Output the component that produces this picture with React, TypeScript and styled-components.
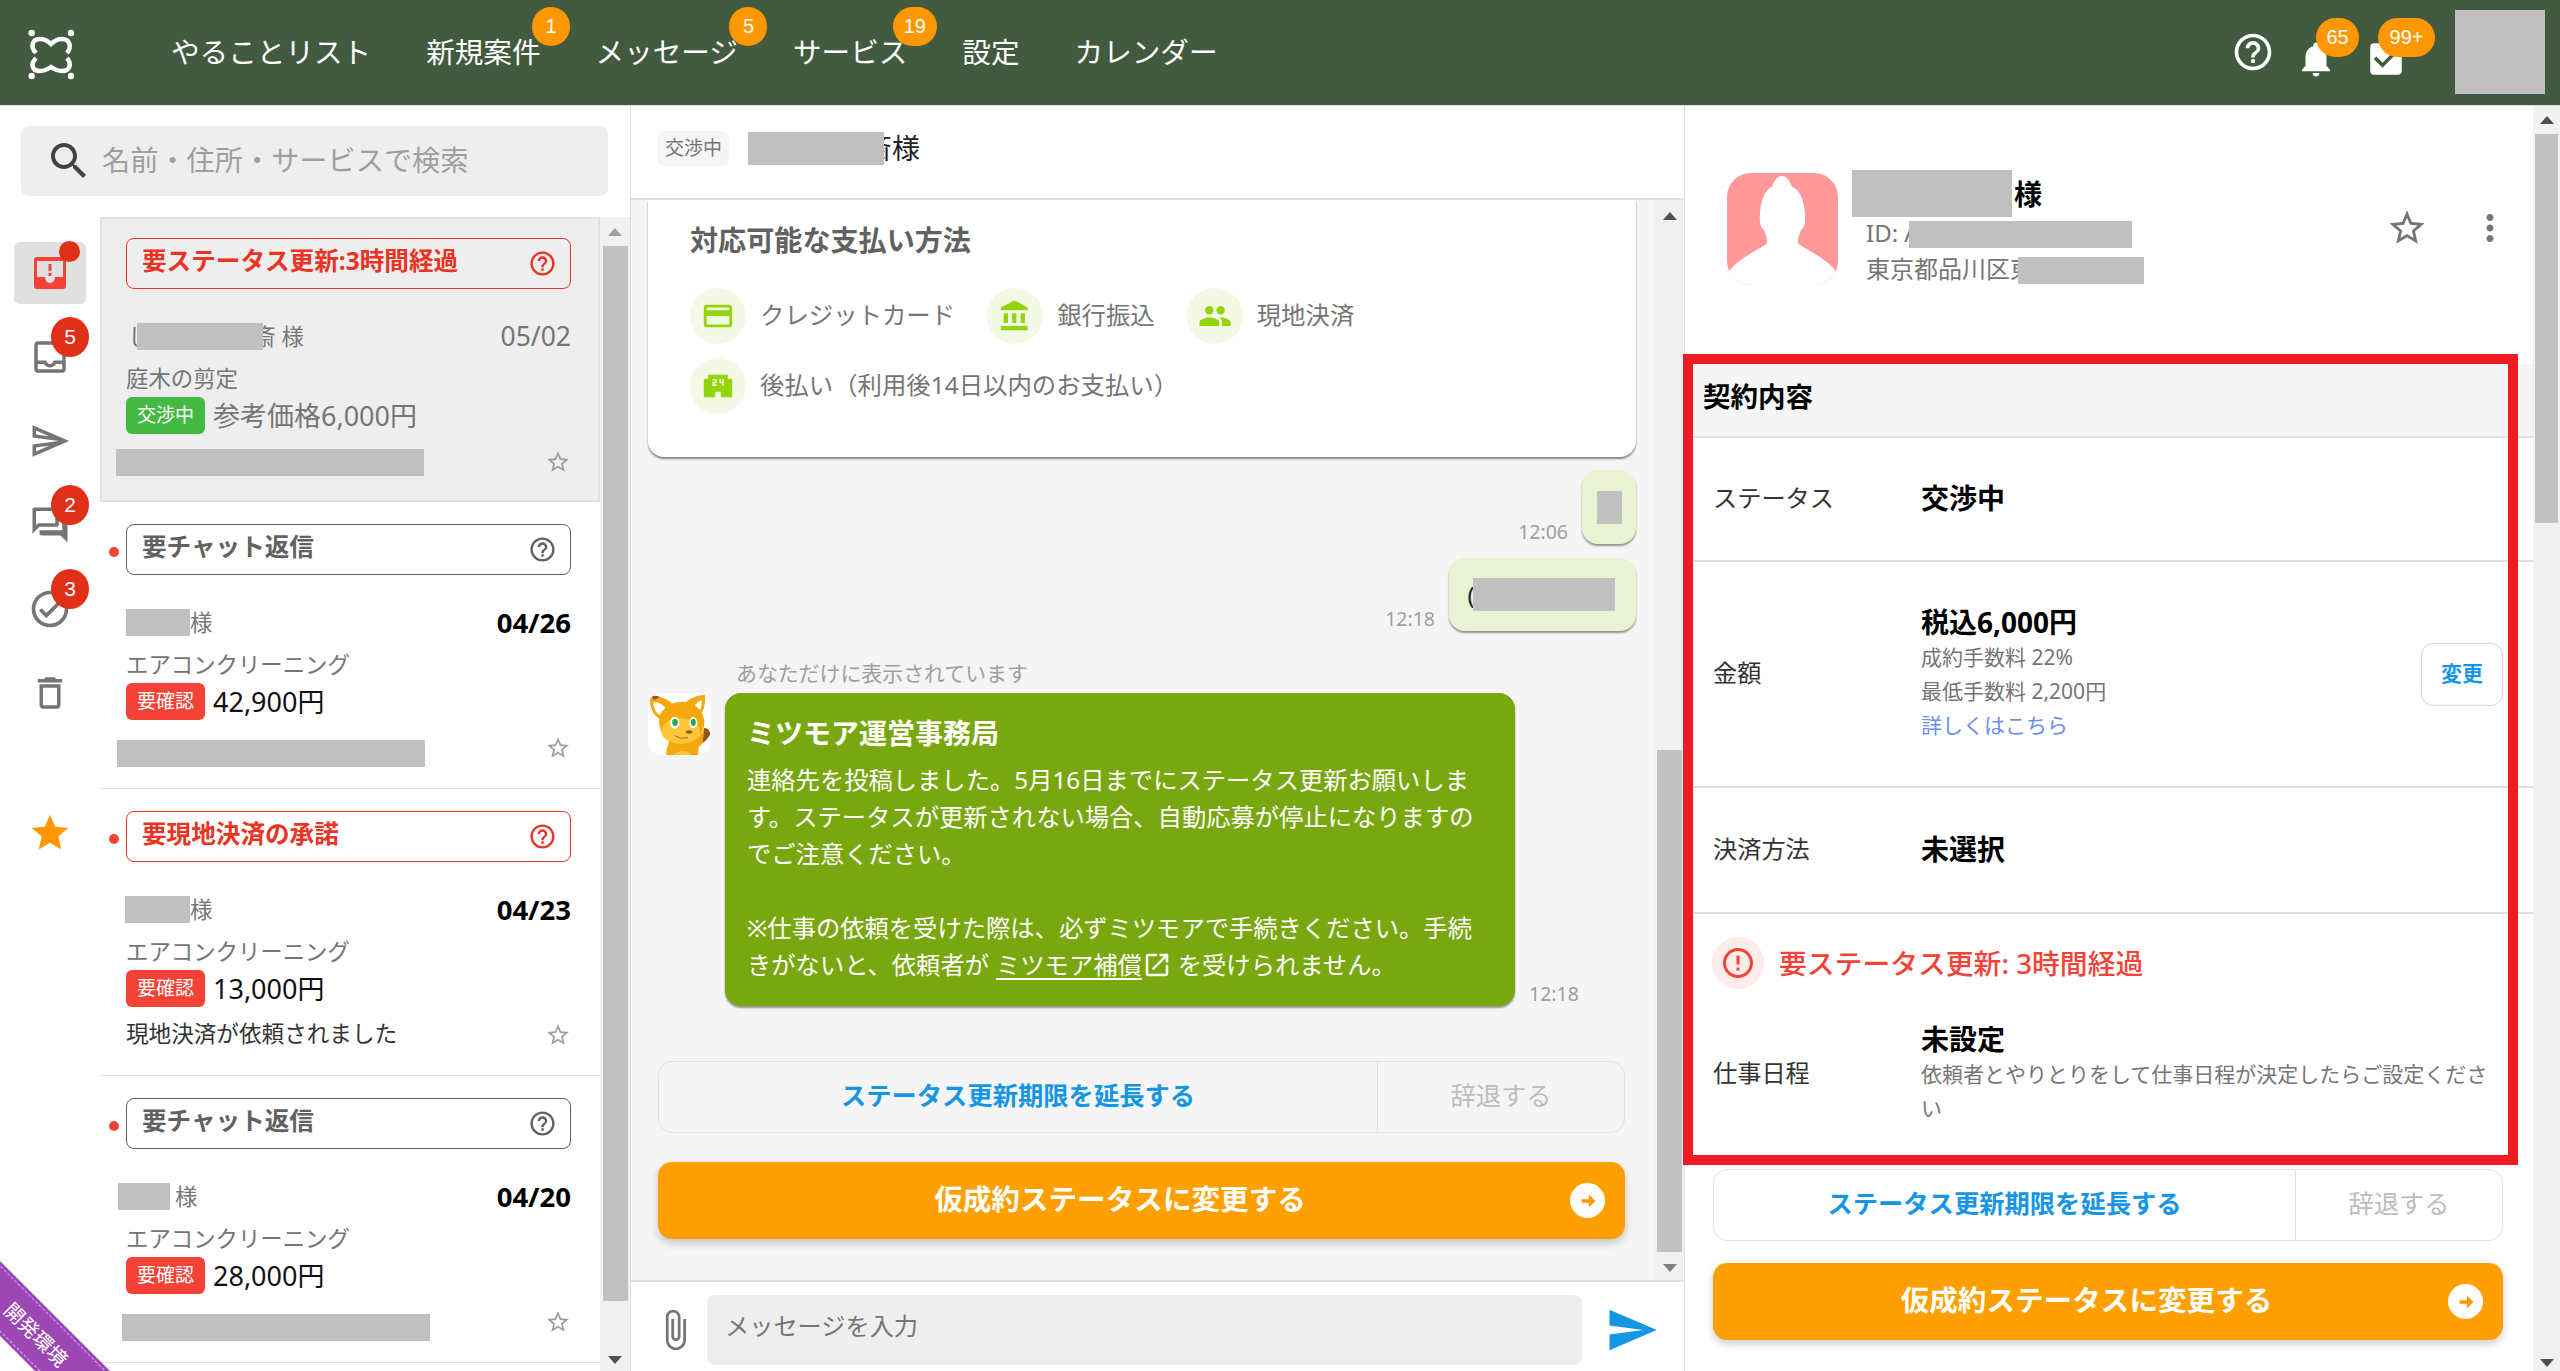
import React from "react"
import styled, { createGlobalStyle } from "styled-components"

const GlobalStyle = createGlobalStyle`
  html, body {
    margin: 0;
    padding: 0;
    overflow: hidden;
    font-family: "Noto Sans", "Noto Sans CJK JP", sans-serif;
    color: #333;
  }
  * {
    box-sizing: border-box;
  }
`

const paths = {
  search:
    "M15.5 14h-.79l-.28-.27C15.41 12.59 16 11.11 16 9.5 16 5.91 13.09 3 9.5 3S3 5.91 3 9.5 5.91 16 9.5 16c1.61 0 3.09-.59 4.23-1.57l.27.28v.79l5 4.99L20.49 19l-4.99-5zm-6 0C7.01 14 5 11.99 5 9.5S7.01 5 9.5 5 14 7.01 14 9.5 11.99 14 9.5 14z",
  help:
    "M11 18h2v-2h-2v2zm1-16C6.48 2 2 6.48 2 12s4.48 10 10 10 10-4.48 10-10S17.52 2 12 2zm0 18c-4.41 0-8-3.59-8-8s3.59-8 8-8 8 3.59 8 8-3.59 8-8 8zm0-14c-2.21 0-4 1.79-4 4h2c0-1.1.9-2 2-2s2 .9 2 2c0 2-3 1.75-3 5h2c0-2.25 3-2.5 3-5 0-2.21-1.79-4-4-4z",
  bell:
    "M12 22c1.1 0 2-.9 2-2h-4c0 1.1.89 2 2 2zm6-6v-5c0-3.07-1.64-5.64-4.5-6.32V4c0-.83-.67-1.5-1.5-1.5s-1.5.67-1.5 1.5v.68C7.63 5.36 6 7.92 6 11v5l-2 2v1h16v-1l-2-2z",
  checkBox:
    "M19 3H5c-1.11 0-2 .9-2 2v14c0 1.1.89 2 2 2h14c1.11 0 2-.9 2-2V5c0-1.1-.89-2-2-2zm-9 14l-5-5 1.41-1.41L10 14.17l7.59-7.59L19 8l-9 9z",
  starBorder:
    "M22 9.24l-7.19-.62L12 2 9.19 8.63 2 9.24l5.46 4.73L5.82 21 12 17.27 18.18 21l-1.63-7.03L22 9.24zM12 15.4l-3.76 2.27 1-4.28-3.32-2.88 4.38-.38L12 6.1l1.71 4.04 4.38.38-3.32 2.88 1 4.28L12 15.4z",
  star: "M12 17.27L18.18 21l-1.64-7.03L22 9.24l-7.19-.61L12 2 9.19 8.63 2 9.24l5.46 4.73L5.82 21z",
  more:
    "M12 8c1.1 0 2-.9 2-2s-.9-2-2-2-2 .9-2 2 .9 2 2 2zm0 2c-1.1 0-2 .9-2 2s.9 2 2 2 2-.9 2-2-.9-2-2-2zm0 6c-1.1 0-2 .9-2 2s.9 2 2 2 2-.9 2-2-.9-2-2-2z",
  inbox:
    "M19 3H5c-1.1 0-2 .9-2 2v14c0 1.1.9 2 2 2h14c1.1 0 2-.9 2-2V5c0-1.1-.9-2-2-2zm0 16H5v-3h3.56c.69 1.19 1.97 2 3.45 2s2.75-.81 3.45-2H19v3zm0-5h-4.99c0 1.1-.9 2-2 2s-2-.9-2-2H5V5h14v9z",
  sendOutline:
    "M4.01 6.03l7.51 3.22-7.52-1 .01-2.22m7.5 8.72L4 17.97v-2.22l7.51-1M2.01 3L2 10l15 2-15 2 .01 7L23 12 2.01 3z",
  send: "M2.01 21L23 12 2.01 3 2 10l15 2-15 2z",
  forum:
    "M15 4v7H5.17L4 12.17V4h11m1-2H3c-.55 0-1 .45-1 1v14l4-4h10c.55 0 1-.45 1-1V3c0-.55-.45-1-1-1zm5 4h-2v9H6v2c0 .55.45 1 1 1h11l4 4V7c0-.55-.45-1-1-1z",
  checkCircle:
    "M12 2C6.48 2 2 6.48 2 12s4.48 10 10 10 10-4.48 10-10S17.52 2 12 2zm0 18c-4.41 0-8-3.59-8-8s3.59-8 8-8 8 3.59 8 8-3.59 8-8 8zm4.59-12.42L10 14.17l-2.59-2.58L6 13l4 4 8-8z",
  trash: "M6 19c0 1.1.9 2 2 2h8c1.1 0 2-.9 2-2V7H6v12zM8 9h8v10H8V9zm7.5-5l-1-1h-5l-1 1H5v2h14V4z",
  card:
    "M20 4H4c-1.11 0-1.99.89-1.99 2L2 18c0 1.11.89 2 2 2h16c1.11 0 2-.89 2-2V6c0-1.11-.89-2-2-2zm0 14H4v-6h16v6zm0-10H4V6h16v2z",
  bank: "M4 10v7h3v-7H4zm6 0v7h3v-7h-3zM2 22h19v-3H2v3zm14-12v7h3v-7h-3zm-4.5-9L2 6v2h19V6l-9.5-5z",
  people:
    "M16 11c1.66 0 2.99-1.34 2.99-3S17.66 5 16 5c-1.66 0-3 1.34-3 3s1.34 3 3 3zm-8 0c1.66 0 2.99-1.34 2.99-3S9.66 5 8 5C6.34 5 5 6.34 5 8s1.34 3 3 3zm0 2c-2.33 0-7 1.17-7 3.5V19h14v-2.5c0-2.33-4.67-3.5-7-3.5zm8 0c-.29 0-.62.02-.97.05 1.16.84 1.97 1.97 1.97 3.45V19h6v-2.5c0-2.33-4.67-3.5-7-3.5z",
  store: "M19 7V4H5v3H2v13h8v-4h4v4h8V7h-3zm-8 3H9v1h2v1H8V9h2V8H8V7h3v3zm5 2h-1v-2h-2V7h1v2h1V7h1v5z",
  clip:
    "M16.5 6v11.5c0 2.21-1.79 4-4 4s-4-1.79-4-4V5c0-1.38 1.12-2.5 2.5-2.5s2.5 1.12 2.5 2.5v10.5c0 .55-.45 1-1 1s-1-.45-1-1V6H10v9.5c0 1.38 1.12 2.5 2.5 2.5s2.5-1.12 2.5-2.5V5c0-2.21-1.79-4-4-4S7 2.79 7 5v12.5c0 3.04 2.46 5.5 5.5 5.5s5.5-2.46 5.5-5.5V6h-1.5z",
  open:
    "M19 19H5V5h7V3H5c-1.11 0-2 .9-2 2v14c0 1.1.89 2 2 2h14c1.1 0 2-.9 2-2v-7h-2v7zM14 3v2h3.59l-9.83 9.83 1.41 1.41L19 6.41V10h2V3h-7z",
  arrow: "M13 5l7 7-7 7v-5H5v-4h8z",
  error:
    "M11 15h2v2h-2zm0-8h2v6h-2zm.99-5C6.47 2 2 6.48 2 12s4.47 10 9.99 10C17.52 22 22 17.52 22 12S17.52 2 11.99 2zM12 20c-4.42 0-8-3.58-8-8s3.58-8 8-8 8 3.58 8 8-3.58 8-8 8z",
}

const Svg = styled.svg<{ $size: number; $color: string }>`
  display: block;
  flex: none;
  width: ${({ $size }) => $size}px;
  height: ${({ $size }) => $size}px;
  fill: ${({ $color }) => $color};
`

const Icon = ({ d, size, color }: { d: string; size: number; color: string }) => (
  <Svg viewBox="0 0 24 24" $size={size} $color={color}>
    <path d={d} />
  </Svg>
)

const Page = styled.div`
  position: relative;
  width: 2560px;
  height: 1371px;
  overflow: hidden;
  display: flex;
  flex-direction: column;
  background: #fff;
`

// top bar
const HeaderBar = styled.header`
  flex: none;
  height: 106px;
  display: flex;
  align-items: center;
  padding: 0 15px 2px 15px;
  background: #425a40;
  border-bottom: 1px solid #e0e0e0;
`

const LogoMark = styled.svg`
  flex: none;
  width: 70px;
  height: 70px;
  margin-right: 58.5px;
`

const NavItem = styled.a`
  position: relative;
  padding: 0 27.5px;
  font-size: 28.6px;
  line-height: 40px;
  color: #fff;
`

const OrangeBadge = styled.span<{ $w?: number }>`
  position: absolute;
  top: -25px;
  right: -2px;
  min-width: ${({ $w }) => $w ?? 38}px;
  height: 39px;
  border-radius: 20px;
  background: #ff9800;
  color: #fff;
  font-family: "Liberation Sans", Arial, sans-serif;
  font-size: 20px;
  line-height: 39px;
  text-align: center;
`

const HeaderTools = styled.div`
  margin-left: auto;
  display: flex;
  align-items: center;
`

const HeaderTool = styled.div<{ $drop?: number; $after: number }>`
  position: relative;
  margin-top: ${({ $drop }) => $drop ?? 0}px;
  margin-right: ${({ $after }) => $after}px;
`

const ToolBadge = styled(OrangeBadge)<{ $left: number }>`
  top: -20px;
  right: auto;
  left: ${({ $left }) => $left}px;
`

const HeaderAvatar = styled.div`
  width: 90px;
  height: 84px;
  background: #c0c0c0;
`

// three panes
const Panes = styled.main`
  flex: 1;
  min-height: 0;
  display: flex;
`

const LeftPane = styled.section`
  flex: none;
  width: 631px;
  display: flex;
  flex-direction: column;
  border-right: 1px solid #e0e0e0;
`

const SearchBox = styled.div`
  flex: none;
  height: 70px;
  margin: 20px 22px 21px 21px;
  padding-left: 24px;
  display: flex;
  align-items: center;
  gap: 9px;
  border-radius: 8px;
  background: #eee;
  font-size: 28.2px;
  color: #9e9e9e;
`

const SearchHint = styled.span`
  margin-top: -5px;
`

const LeftBody = styled.div`
  flex: 1;
  min-height: 0;
  display: flex;
`

const SideNav = styled.nav`
  flex: none;
  width: 100px;
  padding: 25px 0 0 14px;
  display: flex;
  flex-direction: column;
  gap: 22px;
`

const SideButton = styled.div<{ $active?: boolean; $space?: number }>`
  position: relative;
  width: 72px;
  height: 62px;
  margin-top: ${({ $space }) => $space ?? 0}px;
  display: flex;
  align-items: center;
  justify-content: center;
  border-radius: 6px;
  background: ${({ $active }) => ($active ? "#e0e0e0" : "transparent")};
`

const SideCount = styled.span`
  position: absolute;
  top: -9px;
  left: 37px;
  width: 38px;
  height: 40px;
  border-radius: 50%;
  background: #e03017;
  color: #fff;
  font-family: "Liberation Sans", Arial, sans-serif;
  font-size: 21px;
  line-height: 40px;
  text-align: center;
`

const SideDot = styled.span`
  position: absolute;
  top: -1px;
  left: 45px;
  width: 21px;
  height: 21px;
  border-radius: 50%;
  background: #e03017;
`

const List = styled.div`
  flex: none;
  width: 500px;
  overflow: hidden;
`

const Item = styled.article<{ $selected?: boolean }>`
  position: relative;
  height: ${({ $selected }) => ($selected ? 285 : 287)}px;
  padding: ${({ $selected }) => ($selected ? "19px 27px 0 24px" : "22px 29px 0 26px")};
  background: ${({ $selected }) => ($selected ? "#eee" : "#fff")};
  border-bottom: 1px solid #e0e0e0;
  border: ${({ $selected }) => ($selected ? "2px solid #e0e0e0" : "")};
`

const UnreadDot = styled.span`
  position: absolute;
  left: 9px;
  top: 45px;
  width: 10px;
  height: 10px;
  border-radius: 50%;
  background: #f44336;
`

const AlertBox = styled.div<{ $color: string }>`
  height: 51px;
  padding: 0 13px 0 15px;
  display: flex;
  align-items: center;
  justify-content: space-between;
  border: 1px solid ${({ $color }) => $color};
  border-radius: 8px;
  color: ${({ $color }) => $color};
  font-size: 24.6px;
  font-weight: 700;
  line-height: 40px;
  white-space: nowrap;
`

const AlertText = styled.span`
  margin-top: -5px;
`

const NameRow = styled.div`
  height: 27px;
  margin-top: 34px;
  display: flex;
  align-items: center;
  justify-content: space-between;
`

const ItemName = styled.div`
  font-size: 22.4px;
  line-height: 27px;
  color: #757575;
  white-space: nowrap;
`

const NameStub = styled.span`
  margin-left: 2px;
`

const Redact = styled.span<{ $w: number; $h: number; $left?: number; $right?: number; $top?: number }>`
  position: relative;
  z-index: 1;
  display: inline-block;
  flex: none;
  vertical-align: top;
  width: ${({ $w }) => $w}px;
  height: ${({ $h }) => $h}px;
  margin-left: ${({ $left }) => $left ?? 0}px;
  margin-right: ${({ $right }) => $right ?? 0}px;
  margin-top: ${({ $top }) => $top ?? 0}px;
  background: #c0c0c0;
`

const ItemDate = styled.div<{ $unread?: boolean }>`
  font-size: ${({ $unread }) => ($unread ? 27.5 : 26.5)}px;
  line-height: 27px;
  font-weight: ${({ $unread }) => ($unread ? 700 : 400)};
  color: ${({ $unread }) => ($unread ? "#000" : "#757575")};
`

const ServiceName = styled.div`
  margin-top: 14px;
  font-size: 22.4px;
  line-height: 30px;
  color: #757575;
`

const PriceRow = styled.div`
  margin-top: 3px;
  display: flex;
  align-items: center;
  gap: 8px;
`

const StateTag = styled.span<{ $color: string }>`
  flex: none;
  width: 79px;
  height: 37px;
  border-radius: 6px;
  background: ${({ $color }) => $color};
  color: #fff;
  font-size: 19px;
  line-height: 37px;
  text-align: center;
`

const Price = styled.span<{ $muted?: boolean }>`
  font-size: 27px;
  line-height: 37px;
  color: ${({ $muted }) => ($muted ? "#757575" : "#111")};
`

const FootRow = styled.div`
  margin-top: 15px;
  display: flex;
  align-items: flex-start;
  justify-content: space-between;
`

const FootNote = styled.span`
  margin-top: -3px;
  font-size: 22.6px;
  line-height: 30px;
  color: #333;
`

const ScrollTrack = styled.div<{ $width: number }>`
  flex: none;
  width: ${({ $width }) => $width}px;
  display: flex;
  flex-direction: column;
  align-items: center;
  background: #f1f1f1;
`

const TrackButton = styled.div<{ $h: number }>`
  flex: none;
  height: ${({ $h }) => $h}px;
  display: flex;
  align-items: center;
  justify-content: center;
`

const TrackBottom = styled(TrackButton)`
  margin-top: auto;
`

const Triangle = styled.span<{ $down?: boolean; $color: string }>`
  width: 0;
  height: 0;
  border-left: 7px solid transparent;
  border-right: 7px solid transparent;
  border-${({ $down }) => ($down ? "top" : "bottom")}: 8px solid ${({ $color }) => $color};
`

const TrackThumb = styled.div<{ $w: number; $h: number; $top: number }>`
  flex: none;
  width: ${({ $w }) => $w}px;
  height: ${({ $h }) => $h}px;
  margin-top: ${({ $top }) => $top}px;
  background: #c1c1c1;
`

const Scrollbar = (props: {
  width: number
  thumbW: number
  thumbH: number
  thumbTop: number
  upH: number
  downH: number
  upColor: string
  downColor: string
}) => (
  <ScrollTrack $width={props.width}>
    <TrackButton $h={props.upH}>
      <Triangle $color={props.upColor} />
    </TrackButton>
    <TrackThumb $w={props.thumbW} $h={props.thumbH} $top={props.thumbTop} />
    <TrackBottom $h={props.downH}>
      <Triangle $down $color={props.downColor} />
    </TrackBottom>
  </ScrollTrack>
)

// chat pane
const CenterPane = styled.section`
  flex: none;
  width: 1054px;
  display: flex;
  flex-direction: column;
  border-right: 1px solid #e0e0e0;
`

const ChatTitle = styled.div`
  flex: none;
  height: 94px;
  padding: 0 0 8px 27px;
  display: flex;
  align-items: center;
  border-bottom: 2px solid #e0e0e0;
`

const TitleTag = styled.span`
  width: 71px;
  height: 35px;
  margin-right: 19px;
  border-radius: 6px;
  background: #f5f5f5;
  color: #757575;
  font-size: 19px;
  line-height: 35px;
  text-align: center;
`

const TitleName = styled.div`
  font-size: 28px;
  line-height: 33px;
  color: #222;
  white-space: nowrap;
`

const ChatBody = styled.div`
  flex: 1;
  min-height: 0;
  display: flex;
`

const Feed = styled.div`
  flex: 1;
  min-width: 0;
  padding: 0 19px 0 17px;
  background: #f5f5f5;
  overflow: hidden;
`

const MethodsCard = styled.div`
  height: 257px;
  padding: 20px 42px 0;
  border-radius: 0 0 16px 16px;
  background: #fff;
  box-shadow: 0 2px 2px rgba(0, 0, 0, 0.45);
`

const CardTitle = styled.h3`
  margin: 0 0 28px;
  font-size: 28.1px;
  line-height: 40px;
  font-weight: 700;
  color: #616161;
`

const Methods = styled.div`
  display: flex;
  flex-wrap: wrap;
  gap: 14px 32px;
`

const Method = styled.div`
  display: flex;
  align-items: flex-start;
  gap: 14px;
  font-size: 24.4px;
  line-height: 53px;
  color: #757575;
`

const MethodIcon = styled.span`
  width: 56px;
  height: 56px;
  display: flex;
  align-items: center;
  justify-content: center;
  border-radius: 50%;
  background: #f4f9e6;
`

const OutRow = styled.div<{ $top: number }>`
  margin-top: ${({ $top }) => $top}px;
  display: flex;
  justify-content: flex-end;
  align-items: flex-end;
  gap: 14px;
`

const Time = styled.span`
  font-size: 19.5px;
  line-height: 24px;
  color: #9e9e9e;
`

const OutBubble = styled.div<{ $w: number; $h: number }>`
  width: ${({ $w }) => $w}px;
  height: ${({ $h }) => $h}px;
  display: flex;
  align-items: center;
  justify-content: center;
  border-radius: 16px;
  background: #e9f3d3;
  box-shadow: 0 2px 2px rgba(0, 0, 0, 0.4);
  font-size: 24px;
  line-height: 33px;
  color: #222;
`

const Notice = styled.div`
  margin: 28px 0 6px 88px;
  font-size: 20.9px;
  line-height: 28px;
  color: #9e9e9e;
`

const BotRow = styled.div`
  display: flex;
  align-items: flex-end;
  gap: 14px;
`

const BotAvatar = styled.svg`
  flex: none;
  align-self: flex-start;
  width: 63px;
  height: 62px;
  border-radius: 14px;
  background: #fff;
`

const BotBubble = styled.div`
  width: 790px;
  height: 313px;
  padding: 20px 22px 0;
  border-radius: 16px;
  background: #79a70f;
  box-shadow: 0 2px 2px rgba(0, 0, 0, 0.4);
  color: #fff;
`

const BotTitle = styled.div`
  margin-bottom: 8px;
  font-size: 28px;
  font-weight: 700;
  line-height: 40px;
`

const BotText = styled.div`
  font-size: 24.3px;
  line-height: 37px;
  white-space: nowrap;
`

const BotLink = styled.a`
  display: inline-flex;
  align-items: center;
  margin: 0 6px 0 7px;
  vertical-align: top;
  span {
    text-decoration: underline;
    text-underline-offset: 4px;
  }
`

const ActionBlock = styled.div<{ $pad: string }>`
  padding: ${({ $pad }) => $pad};
`

const ActionRow = styled.div<{ $bg?: string }>`
  height: 72px;
  display: flex;
  border: 1px solid #e0e0e0;
  border-radius: 14px;
  font-size: 25.3px;
  line-height: 66px;
  text-align: center;
  background: ${({ $bg }) => $bg ?? "transparent"};
`

const ExtendAction = styled.div`
  flex: 1;
  font-weight: 700;
  color: #1596e4;
`

const DeclineAction = styled.div<{ $w: number }>`
  flex: none;
  width: ${({ $w }) => $w}px;
  border-left: 1px solid #e0e0e0;
  color: #bdbdbd;
`

const MainButton = styled.div<{ $top: number }>`
  position: relative;
  height: 77px;
  margin-top: ${({ $top }) => $top}px;
  padding-right: 43px;
  border-radius: 14px;
  background: #ffa000;
  box-shadow: 0 4px 8px rgba(0, 0, 0, 0.2);
  color: #fff;
  font-size: 28.6px;
  font-weight: 700;
  line-height: 73px;
  text-align: center;
`

const ArrowDisc = styled.span`
  position: absolute;
  top: 21px;
  right: 20px;
  width: 35px;
  height: 35px;
  display: flex;
  align-items: center;
  justify-content: center;
  border-radius: 50%;
  background: #fff;
`

const Composer = styled.div`
  flex: none;
  height: 91px;
  padding: 13px 0 6px 22px;
  display: flex;
  align-items: center;
  border-top: 2px solid #e0e0e0;
`

const ComposerInput = styled.div`
  flex: none;
  width: 875px;
  height: 70px;
  margin: 0 23px 0 10px;
  padding: 0 18px 12px;
  display: flex;
  align-items: center;
  border-radius: 8px;
  background: #eee;
  font-size: 24.2px;
  color: #757575;
`

// detail pane
const RightPane = styled.section`
  flex: 1;
  min-width: 0;
  display: flex;
`

const Detail = styled.div`
  flex: 1;
  min-width: 0;
  overflow: hidden;
`

const Profile = styled.div`
  height: 117px;
  margin: 62px 0 79px;
  padding: 0 22px 0 42px;
  display: flex;
  align-items: center;
`

const ProfileAvatar = styled.svg`
  flex: none;
  align-self: flex-end;
  width: 111px;
  height: 112px;
  border-radius: 24px;
  background: #ff9999;
`

const ProfileInfo = styled.div`
  margin-left: 14px;
  font-size: 24px;
  color: #757575;
`

const ProfileName = styled.div`
  display: flex;
  align-items: center;
  gap: 2px;
  height: 47px;
  font-size: 28px;
  font-weight: 700;
  color: #000;
`

const ProfileLine = styled.div<{ $top: number }>`
  height: 27px;
  margin-top: ${({ $top }) => $top}px;
  padding-left: 14px;
  line-height: 24px;
  white-space: nowrap;
`

const ProfileTools = styled.div`
  margin-left: auto;
  margin-top: 3px;
  display: flex;
  gap: 41px;
`

const SectionHead = styled.h2`
  height: 74px;
  margin: 0;
  padding-left: 18px;
  background: #f5f5f5;
  border-bottom: 2px solid #e0e0e0;
  font-size: 27.5px;
  font-weight: 700;
  line-height: 65px;
  color: #000;
`

const Row = styled.div<{ $h: number; $line?: boolean; $top?: number }>`
  height: ${({ $h }) => $h}px;
  margin-top: ${({ $top }) => $top ?? 0}px;
  padding: 0 30px 0 28px;
  display: flex;
  align-items: center;
  border-bottom: ${({ $line }) => ($line ? "2px solid #e0e0e0" : "0")};
`

const RowLabel = styled.div`
  flex: none;
  width: 208px;
  margin-top: -5px;
  font-size: 24.2px;
  color: #333;
`

const RowValue = styled.div`
  margin-top: -2px;
  font-size: 28px;
  font-weight: 700;
  line-height: 36px;
  color: #000;
`

const RowNote = styled.div`
  font-size: 21px;
  line-height: 34px;
  color: #757575;
`

const RowLink = styled.a`
  display: block;
  font-size: 21px;
  line-height: 34px;
  color: #6b8ff0;
`

const ChangeButton = styled.div`
  flex: none;
  width: 82px;
  height: 63px;
  margin-left: auto;
  border: 1px solid #d8d8d8;
  border-radius: 12px;
  color: #1596e4;
  font-size: 21px;
  font-weight: 700;
  line-height: 58px;
  text-align: center;
`

const OverdueRow = styled.div`
  margin-top: 23px;
  padding-left: 27px;
  display: flex;
  align-items: center;
  gap: 15px;
  color: #f44336;
  font-size: 27.8px;
  font-weight: 500;
  line-height: 52px;
`

const OverdueIcon = styled.span`
  width: 52px;
  height: 52px;
  display: flex;
  align-items: center;
  justify-content: center;
  border-radius: 50%;
  background: #feecea;
`

// overlays
const AnnotationFrame = styled.div`
  position: absolute;
  left: 1683px;
  top: 354px;
  width: 835px;
  height: 811px;
  border: 10px solid #ed1c24;
  pointer-events: none;
`

const EnvRibbon = styled.div`
  position: absolute;
  left: -64px;
  top: 1308px;
  width: 200px;
  height: 53px;
  display: flex;
  align-items: center;
  justify-content: center;
  transform: rotate(45deg);
  background: #9b48b5;
  color: #fff;
  &::before {
    content: "";
    position: absolute;
    inset: 3px -3px;
    border: 1px dashed rgba(255, 255, 255, 0.55);
  }
`

const EnvLabel = styled.span`
  font-size: 20px;
  line-height: 20px;
`

const Logo = () => (
  <LogoMark viewBox="0 0 70 70">
    <circle cx="16.7" cy="16" r="3.2" fill="#fff" />
    <circle cx="56" cy="16" r="3.2" fill="#fff" />
    <circle cx="16.7" cy="59" r="3.2" fill="#fff" />
    <circle cx="56" cy="59" r="3.2" fill="#fff" />
    <path
      d="M21 36 C15 30 17 22 25 22 C30 22 33 24 36 27 C39 24 42 22 47 22 C55 22 57 30 52 36"
      fill="none"
      stroke="#fff"
      strokeWidth="4.5"
    />
    <path
      d="M21 41 C15 47 17 54 25 54 C30 54 33 52 36 50 C39 52 42 54 47 54 C55 54 57 47 52 41"
      fill="none"
      stroke="#fff"
      strokeWidth="4.5"
    />
  </LogoMark>
)

const ActiveInbox = () => (
  <Svg viewBox="0 0 32 32" $size={32} $color="#f44336">
    <path
      fillRule="evenodd"
      d="M3 0H29a3 3 0 0 1 3 3V29a3 3 0 0 1-3 3H3a3 3 0 0 1-3-3V3a3 3 0 0 1 3-3Z M3 4V20H11C11 23 13 26 16 26C19 26 21 23 21 20H29V4Z"
    />
    <rect x="14.5" y="7" width="3" height="7" />
    <rect x="14.5" y="16" width="3" height="3" />
  </Svg>
)

const Mascot = () => (
  <BotAvatar viewBox="24 24 189 186">
    <path d="M30 35 C60 30 90 45 100 62 L62 102 C40 95 25 60 30 35Z" fill="#f5a80e" />
    <path d="M30 35 C40 30 50 32 60 36 L44 44Z" fill="#8b5a1e" />
    <path d="M40 52 C55 50 68 58 76 68 L58 90 C46 82 40 66 40 52Z" fill="#fff" />
    <path d="M195 30 C165 30 140 45 130 62 L168 102 C188 92 198 60 195 30Z" fill="#f5a80e" />
    <path d="M186 46 C175 48 168 56 164 64 L176 82 C184 72 186 58 186 46Z" fill="#fff" />
    <path d="M88 165 C84 180 78 198 78 212 H174 L176 186 C186 176 206 160 210 146 C210 136 200 128 192 130 C186 146 176 158 160 166Z" fill="#f5a80e" />
    <path d="M192 130 C200 128 210 136 210 146 C208 156 200 164 190 172 C186 164 194 146 192 130Z" fill="#8b5a1e" />
    <ellipse cx="125" cy="112" rx="68" ry="62" fill="#f5a80e" />
    <ellipse cx="122" cy="138" rx="58" ry="38" fill="#fdc63a" />
    <ellipse cx="104" cy="113" rx="14" ry="18" fill="#fff" />
    <ellipse cx="160" cy="113" rx="12" ry="17" fill="#fff" />
    <ellipse cx="105" cy="112" rx="8.5" ry="11" fill="#1fa85a" />
    <ellipse cx="160" cy="112" rx="7.5" ry="11" fill="#1fa85a" />
    <ellipse cx="147" cy="141" rx="10" ry="5" fill="#8b5a1e" />
    <path d="M104 152 Q122 164 144 158" fill="none" stroke="#8b5a1e" strokeWidth="2.5" />
    <ellipse cx="128" cy="214" rx="26" ry="16" fill="#fdc63a" />
  </BotAvatar>
)

const AlertTitle = ({ color, text }: { color: string; text: string }) => (
  <AlertBox $color={color}>
    <AlertText>{text}</AlertText>
    <Icon d={paths.help} size={29} color={color} />
  </AlertBox>
)

const FootStar = () => <Icon d={paths.starBorder} size={26} color="#9e9e9e" />

const RED = "#ea3323"
const GREY = "#616161"

const ContractActions = ({ declineWidth, pad, bg }: { declineWidth: number; pad: string; bg?: string }) => (
  <ActionBlock $pad={pad}>
    <ActionRow $bg={bg}>
      <ExtendAction>ステータス更新期限を延長する</ExtendAction>
      <DeclineAction $w={declineWidth}>辞退する</DeclineAction>
    </ActionRow>
    <MainButton $top={declineWidth > 220 ? 29 : 22}>
      仮成約ステータスに変更する
      <ArrowDisc>
        <Icon d={paths.arrow} size={22} color="#ff9800" />
      </ArrowDisc>
    </MainButton>
  </ActionBlock>
)

const App = () => (
  <Page>
    <GlobalStyle />
    <HeaderBar>
      <Logo />
      <NavItem>やることリスト</NavItem>
      <NavItem>
        新規案件<OrangeBadge>1</OrangeBadge>
      </NavItem>
      <NavItem>
        メッセージ<OrangeBadge>5</OrangeBadge>
      </NavItem>
      <NavItem>
        サービス<OrangeBadge $w={44}>19</OrangeBadge>
      </NavItem>
      <NavItem>設定</NavItem>
      <NavItem>カレンダー</NavItem>
      <HeaderTools>
        <HeaderTool $after={20}>
          <Icon d={paths.help} size={44} color="#fff" />
        </HeaderTool>
        <HeaderTool $after={28} $drop={15}>
          <Icon d={paths.bell} size={42} color="#fff" />
          <ToolBadge $left={21} $w={43}>65</ToolBadge>
        </HeaderTool>
        <HeaderTool $after={48} $drop={15}>
          <Icon d={paths.checkBox} size={42} color="#fff" />
          <ToolBadge $left={13} $w={57}>99+</ToolBadge>
        </HeaderTool>
        <HeaderAvatar />
      </HeaderTools>
    </HeaderBar>

    <Panes>
      <LeftPane>
        <SearchBox>
          <Icon d={paths.search} size={48} color="#424242" />
          <SearchHint>名前・住所・サービスで検索</SearchHint>
        </SearchBox>
        <LeftBody>
          <SideNav>
            <SideButton $active>
              <ActiveInbox />
              <SideDot />
            </SideButton>
            <SideButton>
              <Icon d={paths.inbox} size={42} color="#757575" />
              <SideCount>5</SideCount>
            </SideButton>
            <SideButton>
              <Icon d={paths.sendOutline} size={42} color="#757575" />
            </SideButton>
            <SideButton>
              <Icon d={paths.forum} size={42} color="#757575" />
              <SideCount>2</SideCount>
            </SideButton>
            <SideButton>
              <Icon d={paths.checkCircle} size={44} color="#757575" />
              <SideCount>3</SideCount>
            </SideButton>
            <SideButton>
              <Icon d={paths.trash} size={42} color="#757575" />
            </SideButton>
            <SideButton $space={56}>
              <Icon d={paths.star} size={44} color="#ff9800" />
            </SideButton>
          </SideNav>

          <List>
            <Item $selected>
              <AlertTitle color={RED} text="要ステータス更新:3時間経過" />
              <NameRow>
                <ItemName>
                  <NameStub>し</NameStub>
                  <Redact $w={126} $h={27} $left={-13} $right={-10} />斎&nbsp;様
                </ItemName>
                <ItemDate>05/02</ItemDate>
              </NameRow>
              <ServiceName>庭木の剪定</ServiceName>
              <PriceRow>
                <StateTag $color="#43b944">交渉中</StateTag>
                <Price $muted>参考価格6,000円</Price>
              </PriceRow>
              <FootRow>
                <Redact $w={308} $h={27} $left={-10} />
                <FootStar />
              </FootRow>
            </Item>

            <Item>
              <UnreadDot />
              <AlertTitle color={GREY} text="要チャット返信" />
              <NameRow>
                <ItemName>
                  <Redact $w={64} $h={27} />様
                </ItemName>
                <ItemDate $unread>04/26</ItemDate>
              </NameRow>
              <ServiceName>エアコンクリーニング</ServiceName>
              <PriceRow>
                <StateTag $color="#f44336">要確認</StateTag>
                <Price>42,900円</Price>
              </PriceRow>
              <FootRow>
                <Redact $w={308} $h={27} $left={-9} $top={5} />
                <FootStar />
              </FootRow>
            </Item>

            <Item>
              <UnreadDot />
              <AlertTitle color={RED} text="要現地決済の承諾" />
              <NameRow>
                <ItemName>
                  <Redact $w={65} $h={27} $left={-1} />様
                </ItemName>
                <ItemDate $unread>04/23</ItemDate>
              </NameRow>
              <ServiceName>エアコンクリーニング</ServiceName>
              <PriceRow>
                <StateTag $color="#f44336">要確認</StateTag>
                <Price>13,000円</Price>
              </PriceRow>
              <FootRow>
                <FootNote>現地決済が依頼されました</FootNote>
                <FootStar />
              </FootRow>
            </Item>

            <Item>
              <UnreadDot />
              <AlertTitle color={GREY} text="要チャット返信" />
              <NameRow>
                <ItemName>
                  <Redact $w={52} $h={27} $left={-8} $right={5} />様
                </ItemName>
                <ItemDate $unread>04/20</ItemDate>
              </NameRow>
              <ServiceName>エアコンクリーニング</ServiceName>
              <PriceRow>
                <StateTag $color="#f44336">要確認</StateTag>
                <Price>28,000円</Price>
              </PriceRow>
              <FootRow>
                <Redact $w={308} $h={27} $left={-4} $top={5} />
                <FootStar />
              </FootRow>
            </Item>
          </List>

          <Scrollbar
            width={30}
            upH={29}
            downH={22}
            thumbW={25}
            thumbH={1055}
            thumbTop={0}
            upColor="#a0a0a0"
            downColor="#505050"
          />
        </LeftBody>
      </LeftPane>

      <CenterPane>
        <ChatTitle>
          <TitleTag>交渉中</TitleTag>
          <TitleName>
            <Redact $w={136} $h={33} $right={-20} />斎様
          </TitleName>
        </ChatTitle>

        <ChatBody>
          <Feed>
            <MethodsCard>
              <CardTitle>対応可能な支払い方法</CardTitle>
              <Methods>
                <Method>
                  <MethodIcon>
                    <Icon d={paths.card} size={34} color="#93d50b" />
                  </MethodIcon>
                  クレジットカード
                </Method>
                <Method>
                  <MethodIcon>
                    <Icon d={paths.bank} size={34} color="#93d50b" />
                  </MethodIcon>
                  銀行振込
                </Method>
                <Method>
                  <MethodIcon>
                    <Icon d={paths.people} size={34} color="#93d50b" />
                  </MethodIcon>
                  現地決済
                </Method>
                <Method>
                  <MethodIcon>
                    <Icon d={paths.store} size={34} color="#93d50b" />
                  </MethodIcon>
                  後払い（利用後14日以内のお支払い）
                </Method>
              </Methods>
            </MethodsCard>

            <OutRow $top={13}>
              <Time>12:06</Time>
              <OutBubble $w={54} $h={74}>
                <Redact $w={25} $h={33} />
              </OutBubble>
            </OutRow>
            <OutRow $top={14}>
              <Time>12:18</Time>
              <OutBubble $w={187} $h={73}>
                (<Redact $w={142} $h={33} $left={-2} $right={3} />
              </OutBubble>
            </OutRow>

            <Notice>あなただけに表示されています</Notice>
            <BotRow>
              <Mascot />
              <BotBubble>
                <BotTitle>ミツモア運営事務局</BotTitle>
                <BotText>
                  連絡先を投稿しました。5月16日までにステータス更新お願いしま
                  <br />
                  す。ステータスが更新されない場合、自動応募が停止になりますの
                  <br />
                  でご注意ください。
                  <br />
                  <br />
                  ※仕事の依頼を受けた際は、必ずミツモアで手続きください。手続
                  <br />
                  きがないと、依頼者が
                  <BotLink>
                    <span>ミツモア補償</span>
                    <Icon d={paths.open} size={30} color="#fff" />
                  </BotLink>
                  を受けられません。
                </BotText>
              </BotBubble>
              <Time>12:18</Time>
            </BotRow>

            <ContractActions declineWidth={247} pad="55px 11px 0 10px" />
          </Feed>
          <Scrollbar
            width={29}
            upH={32}
            downH={32}
            thumbW={25}
            thumbH={502}
            thumbTop={518}
            upColor="#505050"
            downColor="#808080"
          />
        </ChatBody>

        <Composer>
          <Icon d={paths.clip} size={44} color="#757575" />
          <ComposerInput>メッセージを入力</ComposerInput>
          <Icon d={paths.send} size={54} color="#1596e4" />
        </Composer>
      </CenterPane>

      <RightPane>
        <Detail>
          <Profile>
            <ProfileAvatar viewBox="0 0 111 112">
              <path
                fill="#fff"
                d="M55 3C50 3 47 8 45 14C38 16 33 30 33 42C32 50 34 55 37 57L40 66L40 70C38 74 10 85 1 100C-1 106 3 112 14 112L97 112C108 112 112 106 110 100C101 85 73 74 71 70L71 66L74 57C77 55 79 50 78 42C78 30 73 16 65 14C63 8 60 3 55 3Z"
              />
            </ProfileAvatar>
            <ProfileInfo>
              <ProfileName>
                <Redact $w={160} $h={47} />様
              </ProfileName>
              <ProfileLine $top={4}>
                ID: A<Redact $w={223} $h={27} $left={-11} />
              </ProfileLine>
              <ProfileLine $top={9}>
                東京都品川区東<Redact $w={126} $h={27} $left={-16} />
              </ProfileLine>
            </ProfileInfo>
            <ProfileTools>
              <Icon d={paths.starBorder} size={42} color="#757575" />
              <Icon d={paths.more} size={42} color="#757575" />
            </ProfileTools>
          </Profile>

          <SectionHead>契約内容</SectionHead>
          <Row $h={124} $line>
            <RowLabel>ステータス</RowLabel>
            <RowValue>交渉中</RowValue>
          </Row>
          <Row $h={226} $line>
            <RowLabel>金額</RowLabel>
            <div>
              <RowValue>税込6,000円</RowValue>
              <RowNote>成約手数料 22%</RowNote>
              <RowNote>最低手数料 2,200円</RowNote>
              <RowLink>詳しくはこちら</RowLink>
            </div>
            <ChangeButton>変更</ChangeButton>
          </Row>
          <Row $h={126} $line>
            <RowLabel>決済方法</RowLabel>
            <RowValue>未選択</RowValue>
          </Row>
          <OverdueRow>
            <OverdueIcon>
              <Icon d={paths.error} size={36} color="#f44336" />
            </OverdueIcon>
            要ステータス更新: 3時間経過
          </OverdueRow>
          <Row $h={104} $top={33}>
            <RowLabel>仕事日程</RowLabel>
            <div>
              <RowValue>未設定</RowValue>
              <RowNote>依頼者とやりとりをして仕事日程が決定したらご設定ください</RowNote>
            </div>
          </Row>
          <ContractActions declineWidth={207} pad="43px 30px 0 28px" bg="#fff" />
        </Detail>
        <Scrollbar
          width={27}
          upH={28}
          downH={16}
          thumbW={23}
          thumbH={389}
          thumbTop={0}
          upColor="#505050"
          downColor="#505050"
        />
      </RightPane>
    </Panes>

    <AnnotationFrame />
    <EnvRibbon>
      <EnvLabel>開発環境</EnvLabel>
    </EnvRibbon>
  </Page>
)

export default App
